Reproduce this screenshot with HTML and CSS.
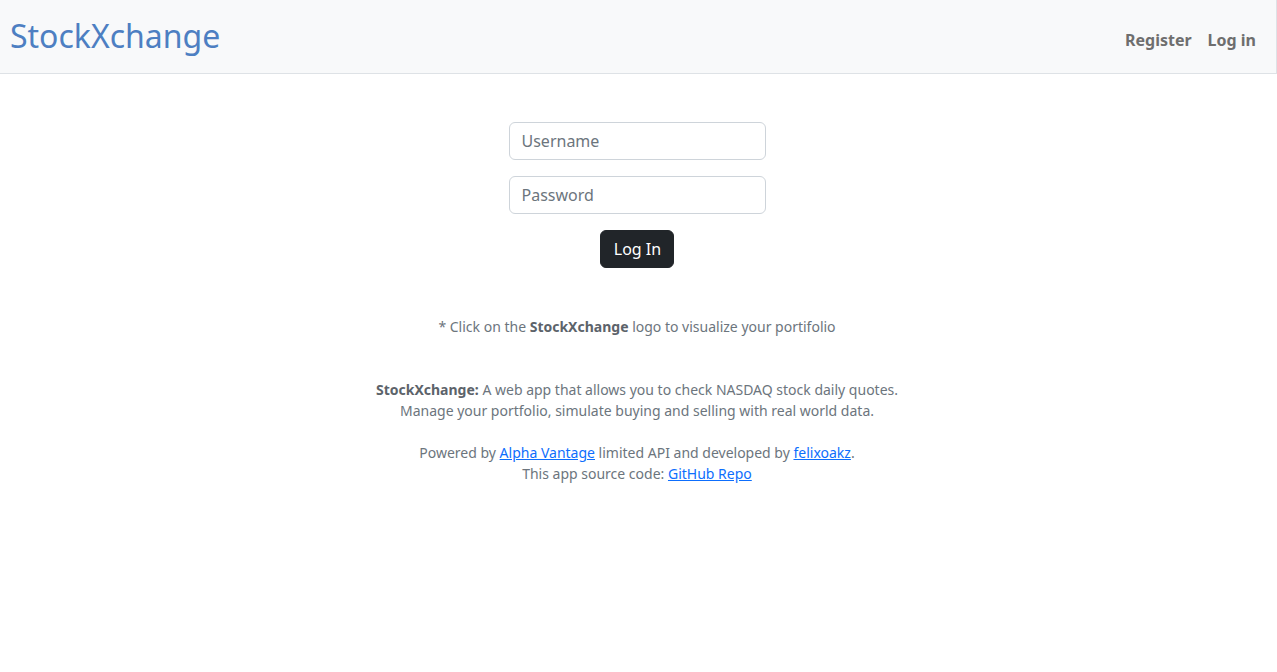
FILE: index.html
```html
<!DOCTYPE html>
<html lang="en">
<head>
<meta charset="utf-8">
<title>StockXchange</title>
<link rel="stylesheet" href="styles.css">
</head>
<body>
<nav class="navbar">
  <a class="brand" href="#">StockXchange</a>
  <div class="nav-links">
    <a class="nav-link" href="#">Register</a>
    <a class="nav-link" href="#">Log in</a>
  </div>
</nav>
<main class="main">
  <form class="login-form">
    <input class="form-control" type="text" placeholder="Username">
    <input class="form-control" type="password" placeholder="Password">
    <button class="btn" type="button">Log In</button>
  </form>
  <p class="hint">* Click on the <b>StockXchange</b> logo to visualize your portifolio</p>
  <p class="about"><b>StockXchange:</b> A web app that allows you to check NASDAQ stock daily quotes.<br>Manage your portfolio, simulate buying and selling with real world data.</p>
  <p class="credits">Powered by <a href="#">Alpha Vantage</a> limited API and developed by <a href="#">felixoakz</a>.<br>This app source code: <a href="#">GitHub Repo</a></p>
</main>
</body>
</html>
```
FILE: styles.css
```css
* { box-sizing: border-box; }
html, body { margin: 0; padding: 0; }
body {
  font-family: "Noto Sans", "Open Sans", sans-serif;
  color: #212529;
  background: #fff;
}
.navbar {
  height: 74px;
  background: #f8f9fa;
  border-bottom: 1px solid #dee2e6;
  border-right: 1px solid #dee2e6;
  display: flex;
  align-items: center;
  justify-content: space-between;
  padding: 0 20px 0 10px;
}
.brand {
  color: #4d7fc2;
  font-size: 32px;
  text-decoration: none;
  line-height: 1;
  margin-top: -2px;
}
.nav-links {
  display: flex;
  gap: 16px;
  margin-top: 6px;
}
.nav-link {
  color: #6e6e6e;
  font-weight: 700;
  font-size: 16px;
  text-decoration: none;
}
.main {
  display: flex;
  flex-direction: column;
  align-items: center;
  padding: 48px 3px 0 0;
  text-align: center;
}
.login-form {
  display: flex;
  flex-direction: column;
  align-items: center;
  gap: 16px;
  width: 257px;
}
.form-control {
  width: 100%;
  height: 38px;
  padding: 6px 12px;
  font-family: inherit;
  font-size: 16px;
  color: #212529;
  border: 1px solid #ced4da;
  border-radius: 6px;
  outline: none;
}
.form-control::placeholder { color: #6c757d; opacity: 1; }
.btn {
  height: 38px;
  padding: 0 12px 0 13px;
  background: #212529;
  color: #fff;
  border: 1px solid #212529;
  border-radius: 6px;
  font-family: inherit;
  font-size: 16px;
}
.hint, .about, .credits {
  font-size: 14px;
  line-height: 21px;
  color: #6c757d;
  margin: 0;
}
.hint { margin-top: 48px; }
.about { margin-top: 42px; }
.credits { margin-top: 21px; }
.main b { color: #5c636a; }
.credits a { color: #0d6efd; text-decoration: underline; }
```
